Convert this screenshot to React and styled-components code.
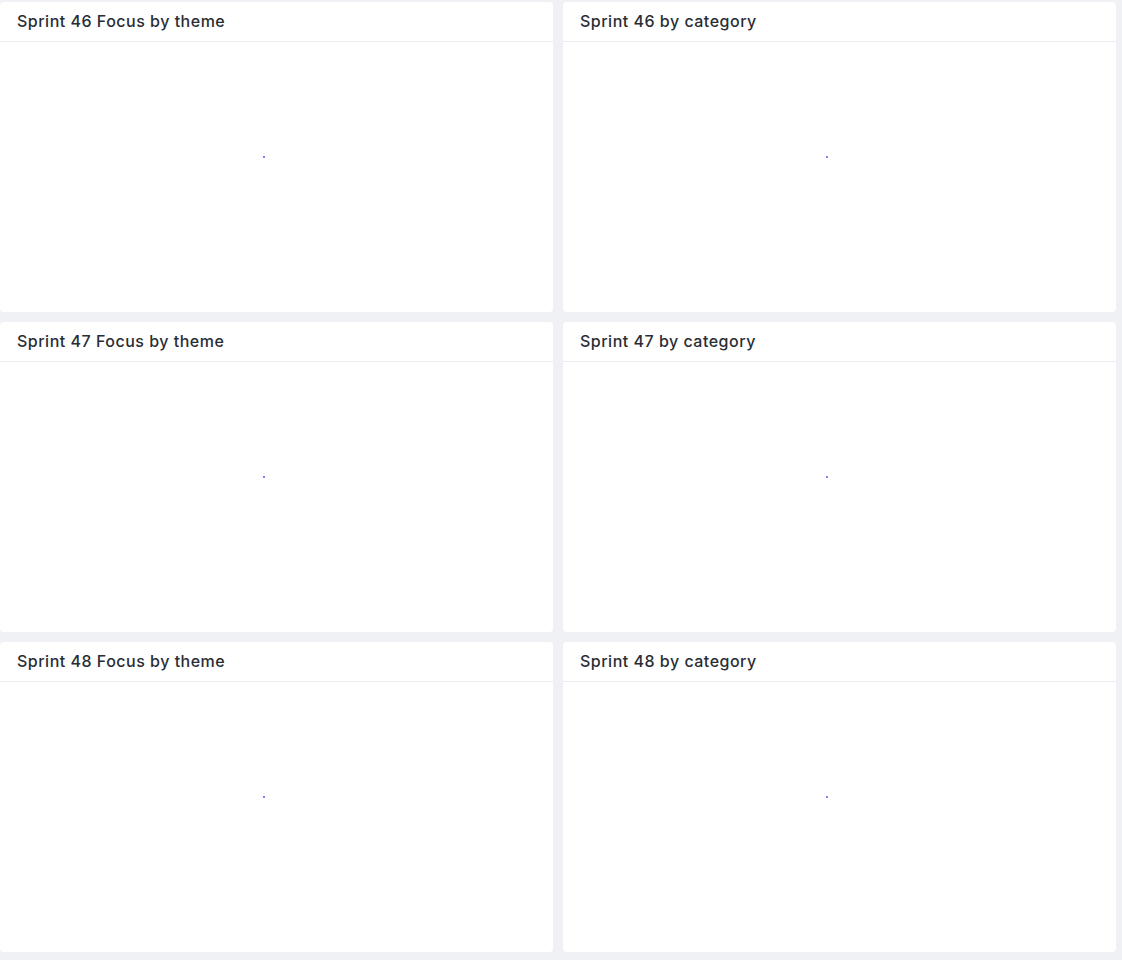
import React from "react";
import styled, { createGlobalStyle } from "styled-components";

const GlobalStyle = createGlobalStyle`
  html, body {
    margin: 0;
    padding: 0;
    background: #f0f1f5;
  }
  body {
    font-family: Inter, "Open Sans", sans-serif;
    color: #292d34;
  }
`;

const Grid = styled.div`
  display: grid;
  grid-template-columns: 553px 553px;
  grid-auto-rows: 310px;
  gap: 10px;
  padding: 2px 6px 8px 0;
`;

const Card = styled.div`
  background: #fff;
  border-radius: 4px;
  display: flex;
  flex-direction: column;
  overflow: hidden;
`;

const Header = styled.div`
  flex: none;
  display: flex;
  align-items: center;
  padding: 0 17px 1px;
  border-bottom: 1px solid #ececef;
  box-sizing: border-box;
  height: 40px;
`;

const Title = styled.h3`
  margin: 0;
  font-size: 16px;
  font-weight: 500;
  letter-spacing: 0.5px;
  color: #292d34;
`;

const ChartBody = styled.div`
  position: relative;
  flex: 1;
`;

const Dot = styled.span`
  position: absolute;
  left: ${(p) => p.$x}px;
  top: 114px;
  width: 2px;
  height: 2px;
  background: #8a7cf2;
`;

const widgets = [
  { title: "Sprint 46 Focus by theme", x: 263 },
  { title: "Sprint 46 by category", x: 263 },
  { title: "Sprint 47 Focus by theme", x: 263 },
  { title: "Sprint 47 by category", x: 263 },
  { title: "Sprint 48 Focus by theme", x: 263 },
  { title: "Sprint 48 by category", x: 263 },
];

export default function App() {
  return (
    <>
      <GlobalStyle />
      <Grid>
        {widgets.map((w) => (
          <Card key={w.title}>
            <Header>
              <Title>{w.title}</Title>
            </Header>
            <ChartBody>
              <Dot $x={w.x} />
            </ChartBody>
          </Card>
        ))}
      </Grid>
    </>
  );
}
